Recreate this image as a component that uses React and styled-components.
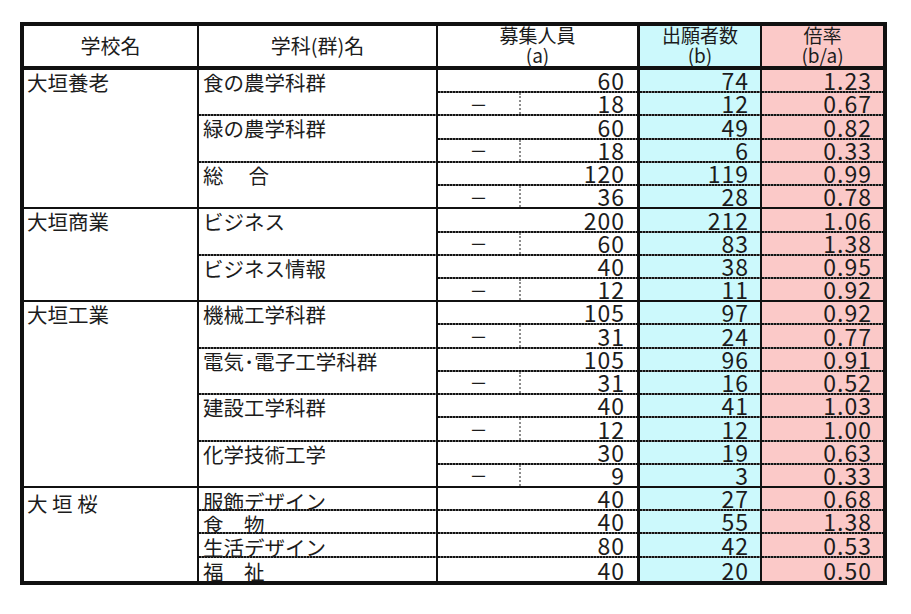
import React from 'react'
import styled, { createGlobalStyle, css } from 'styled-components'

const GlobalStyle = createGlobalStyle`
  html, body {
    margin: 0;
    padding: 0;
    background: #fff;
  }
  body {
    font-family: "Noto Sans CJK JP", "Noto Sans", sans-serif;
    color: #1c1c1c;
  }
`

const ROW_H = 511 / 22
const BLUE = '#ccf9fc'
const PINK = '#fbc9c8'

const schools = [
    {
        name: '大垣養老',
        depts: [
            { name: '食の農学科群', rows: [[60, 74, '1.23'], [18, 12, '0.67']] },
            { name: '緑の農学科群', rows: [[60, 49, '0.82'], [18, 6, '0.33']] },
            { name: '総　 合', rows: [[120, 119, '0.99'], [36, 28, '0.78']] },
        ],
    },
    {
        name: '大垣商業',
        depts: [
            { name: 'ビジネス', rows: [[200, 212, '1.06'], [60, 83, '1.38']] },
            { name: 'ビジネス情報', rows: [[40, 38, '0.95'], [12, 11, '0.92']] },
        ],
    },
    {
        name: '大垣工業',
        depts: [
            { name: '機械工学科群', rows: [[105, 97, '0.92'], [31, 24, '0.77']] },
            { name: '電気･電子工学科群', rows: [[105, 96, '0.91'], [31, 16, '0.52']] },
            { name: '建設工学科群', rows: [[40, 41, '1.03'], [12, 12, '1.00']] },
            { name: '化学技術工学', rows: [[30, 19, '0.63'], [9, 3, '0.33']] },
        ],
    },
    {
        name: '大 垣 桜',
        single: true,
        depts: [
            { name: '服飾デザイン', rows: [[40, 27, '0.68']] },
            { name: '食　物', rows: [[40, 55, '1.38']] },
            { name: '生活デザイン', rows: [[80, 42, '0.53']] },
            { name: '福　祉', rows: [[40, 20, '0.50']] },
        ],
    },
]

// bottom rule of a cell: solid black, an Excel-like dotted rule, or nothing
const rule = (kind, bg = '#fff') => {
    if (kind === 'solid') {
        return css`
            background: ${bg};
            border-bottom: 2px solid #111;
        `
    }
    if (kind === 'dotted') {
        return css`
            background: repeating-linear-gradient(90deg, #111 0 2px, #6e6e6e 2px 3px) left bottom / 100% 2px no-repeat,
                ${bg};
            padding-bottom: 2px;
        `
    }
    return css`
        background: ${bg};
    `
}

const App = () => {
    return (
        <Page>
            <GlobalStyle />
            <Table>
                <Header>
                    <HeadCell>学校名</HeadCell>
                    <HeadCell>学科(群)名</HeadCell>
                    <HeadCell $edge="3px">
                        <HeadStack>
                            <span>募集人員</span>
                            <span>(a)</span>
                        </HeadStack>
                    </HeadCell>
                    <HeadCell $bg={BLUE}>
                        <HeadStack>
                            <span>出願者数</span>
                            <span>(b)</span>
                        </HeadStack>
                    </HeadCell>
                    <HeadCell $bg={PINK} $edge="0">
                        <HeadStack>
                            <span>倍率</span>
                            <span>(b/a)</span>
                        </HeadStack>
                    </HeadCell>
                </Header>
                <Body>
                    {schools.map((school, si) => {
                        const lastSchool = si === schools.length - 1
                        const schoolLine = lastSchool ? 'none' : 'solid'
                        return (
                            <SchoolBlock key={school.name}>
                                <SchoolCell $line={schoolLine} $low={school.single}>
                                    {school.name}
                                </SchoolCell>
                                <DeptList>
                                    {school.depts.map((dept, di) => {
                                        const lastDept = di === school.depts.length - 1
                                        const deptLine = lastDept ? schoolLine : 'dotted'
                                        return (
                                            <DeptBlock key={dept.name}>
                                                <DeptCell $line={deptLine} $low={school.single}>
                                                    {dept.name}
                                                </DeptCell>
                                                <NumList>
                                                    {dept.rows.map((r, ri) => {
                                                        const lastRow = ri === dept.rows.length - 1
                                                        const rowLine = lastRow ? deptLine : 'dotted'
                                                        return (
                                                            <NumRow key={ri}>
                                                                <NumCell $line={rowLine} $edge="3px">
                                                                    {ri === 1 && <Dash>－</Dash>}
                                                                    <Value $pad="12px">{r[0]}</Value>
                                                                </NumCell>
                                                                <NumCell $line={rowLine} $bg={BLUE} $edge="2px">
                                                                    <Value $pad="11px">{r[1]}</Value>
                                                                </NumCell>
                                                                <NumCell $line={rowLine} $bg={PINK} $edge="0">
                                                                    <Value $pad="11px">{r[2]}</Value>
                                                                </NumCell>
                                                            </NumRow>
                                                        )
                                                    })}
                                                </NumList>
                                            </DeptBlock>
                                        )
                                    })}
                                </DeptList>
                            </SchoolBlock>
                        )
                    })}
                </Body>
            </Table>
        </Page>
    )
}

export default App

const Page = styled.div`
    width: 911px;
    height: 614px;
    box-sizing: border-box;
    padding: 22px 0 0 20px;
    overflow: hidden;
`

const Table = styled.div`
    width: 867px;
    height: 563px;
    box-sizing: border-box;
    border: 4px solid #111;
    display: flex;
    flex-direction: column;
`

const Header = styled.div`
    display: grid;
    grid-template-columns: 175px 239px 202px 122px 121px;
    height: 44px;
    box-sizing: border-box;
    border-bottom: 4px solid #111;
`

const HeadCell = styled.div`
    display: flex;
    align-items: center;
    justify-content: center;
    box-sizing: border-box;
    border-right: ${(p) => p.$edge || '2px'} solid #111;
    background: ${(p) => p.$bg || '#fff'};
    font-size: 20px;
    line-height: 22px;
`

const HeadStack = styled.div`
    display: flex;
    flex-direction: column;
    align-items: center;
    font-size: 19px;
    line-height: 20.5px;
    margin-top: -2px;
`

const Body = styled.div`
    flex: 1;
    display: flex;
    flex-direction: column;
`

const SchoolBlock = styled.div`
    display: flex;
`

const SchoolCell = styled.div`
    width: 175px;
    flex: none;
    box-sizing: border-box;
    border-right: 2px solid #111;
    ${(p) => rule(p.$line)}
    padding-top: ${(p) => (p.$low ? '5px' : '2px')};
    padding-left: 3px;
    font-size: 20.5px;
    line-height: 21px;
    white-space: pre;
`

const DeptList = styled.div`
    flex: 1;
    display: flex;
    flex-direction: column;
`

const DeptBlock = styled.div`
    display: flex;
`

const DeptCell = styled.div`
    width: 239px;
    flex: none;
    box-sizing: border-box;
    border-right: 2px solid #111;
    ${(p) => rule(p.$line)}
    padding-top: ${(p) => (p.$low ? '6px' : '2px')};
    padding-left: 4px;
    font-size: 20.5px;
    line-height: ${(p) => (p.$low ? '15px' : '21px')};
    white-space: pre;
`

const NumList = styled.div`
    flex: 1;
    display: flex;
    flex-direction: column;
`

const NumRow = styled.div`
    display: grid;
    grid-template-columns: 202px 122px 121px;
    height: ${ROW_H}px;
`

const NumCell = styled.div`
    display: flex;
    align-items: flex-end;
    box-sizing: border-box;
    border-right: ${(p) => p.$edge} solid #111;
    ${(p) => rule(p.$line, p.$bg)}
`

const Dash = styled.div`
    width: 81px;
    align-self: stretch;
    flex: none;
    display: flex;
    align-items: center;
    justify-content: center;
    border-right: 2px dotted #8c8c8c;
    font-size: 18px;
    line-height: 18px;
`

const Value = styled.div`
    flex: 1;
    text-align: right;
    padding-right: ${(p) => p.$pad};
    margin-bottom: 1px;
    font-size: 23px;
    line-height: 20px;
    letter-spacing: 1px;
`
